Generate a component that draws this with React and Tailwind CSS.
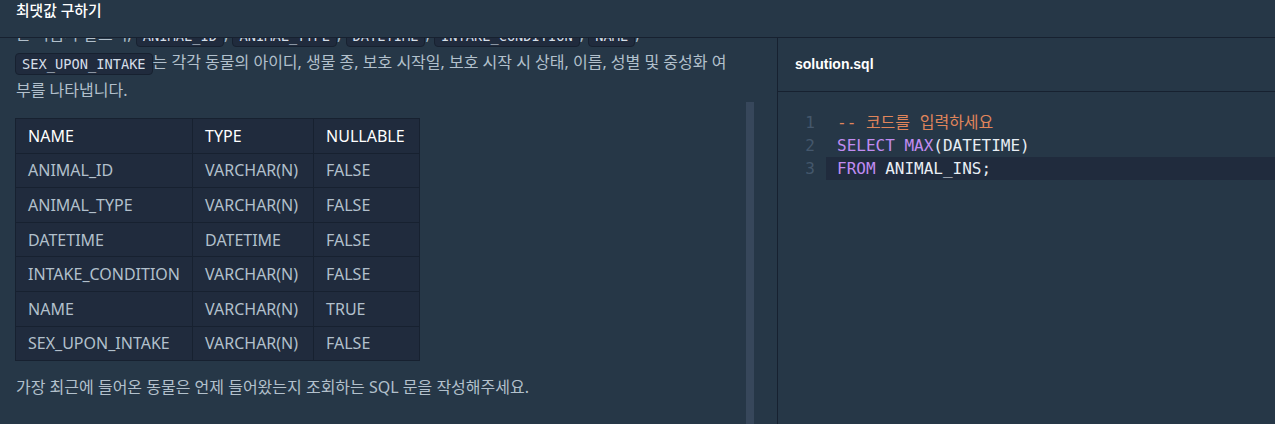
const rows = [
  ["ANIMAL_ID", "VARCHAR(N)", "FALSE"],
  ["ANIMAL_TYPE", "VARCHAR(N)", "FALSE"],
  ["DATETIME", "DATETIME", "FALSE"],
  ["INTAKE_CONDITION", "VARCHAR(N)", "FALSE"],
  ["NAME", "VARCHAR(N)", "TRUE"],
  ["SEX_UPON_INTAKE", "VARCHAR(N)", "FALSE"],
];

function Chip({ children }) {
  return (
    <code className="inline-block rounded-[4px] border border-[#172130] bg-[#202b3d] px-[6px] align-middle font-['DejaVu_Sans_Mono',monospace] text-[13.7px] leading-[20px] text-[#d5dee8]">
      {children}
    </code>
  );
}

export default function App() {
  return (
    <div className="flex h-[424px] w-[1275px] flex-col overflow-hidden bg-[#263747] font-['Noto_Sans','Noto_Sans_CJK_KR',sans-serif]">
      <div className="h-[38px] shrink-0 border-b border-[#172130] pl-4 text-[14.8px] font-medium leading-[20px] text-white">
        최댓값 구하기
      </div>
      <div className="flex min-h-0 flex-1">
        <div className="flex w-[778px] shrink-0 overflow-hidden border-r border-[#172130]">
          <div className="min-w-0 flex-1 pl-4">
            <div className="-mt-[18px] text-[16px] leading-[28px] text-[#b2c0cc]">
              <div className="whitespace-nowrap">
                는 다음과 같으며, <Chip>ANIMAL_ID</Chip>, <Chip>ANIMAL_TYPE</Chip>, <Chip>DATETIME</Chip>,{" "}
                <Chip>INTAKE_CONDITION</Chip>, <Chip>NAME</Chip>,
              </div>
              <div className="-ml-px whitespace-nowrap">
                <Chip>SEX_UPON_INTAKE</Chip>는 각각 동물의 아이디, 생물 종, 보호 시작일, 보호 시작 시 상태, 이름, 성별 및 중성화 여
              </div>
              <div className="whitespace-nowrap">부를 나타냅니다.</div>
            </div>
            <table className="-ml-px mt-[14px] table-fixed border-collapse text-[16px] leading-[22px]">
              <thead>
                <tr className="h-[34.6px]">
                  <th className="w-[175px] border border-[#172130] bg-[#202b3d] px-3 text-left font-normal text-white">NAME</th>
                  <th className="w-[121px] border border-[#172130] bg-[#202b3d] px-3 text-left font-normal text-white">TYPE</th>
                  <th className="w-[106px] border border-[#172130] bg-[#202b3d] px-3 text-left font-normal text-white">NULLABLE</th>
                </tr>
              </thead>
              <tbody>
                {rows.map((r) => (
                  <tr key={r[0]} className="h-[34.6px]">
                    {r.map((c, i) => (
                      <td key={i} className="whitespace-nowrap border border-[#172130] bg-[#202b3d] px-3 text-[#b2c0cc]">
                        {c}
                      </td>
                    ))}
                  </tr>
                ))}
              </tbody>
            </table>
            <p className="mt-[12px] whitespace-nowrap text-[16px] leading-[28px] text-[#b2c0cc]">
              가장 최근에 들어온 동물은 언제 들어왔는지 조회하는 SQL 문을 작성해주세요.
            </p>
          </div>
          <div className="w-[8px] shrink-0 pt-[64px]">
            <div className="h-full bg-[#37475b]" />
          </div>
          <div className="w-[23px] shrink-0" />
        </div>
        <div className="flex min-w-0 flex-1 flex-col">
          <div className="flex h-[54px] shrink-0 items-center border-b border-[#172130] pl-[17px] font-['Liberation_Sans',sans-serif] text-[14px] font-bold text-white">
            solution.sql
          </div>
          <div className="pt-[19px] font-['DejaVu_Sans_Mono','Noto_Sans_CJK_KR',monospace] text-[16px] leading-[23px]">
            <div className="flex h-[23px]">
              <div className="w-[48px] shrink-0 pr-[11px] text-right text-[#44576c]">1</div>
              <div className="flex-1 whitespace-pre pl-[11px] text-[#e0855b]">-- 코드를 입력하세요</div>
            </div>
            <div className="flex h-[23px]">
              <div className="w-[48px] shrink-0 pr-[11px] text-right text-[#44576c]">2</div>
              <div className="flex-1 whitespace-pre pl-[11px] text-[#e8eef4]">
                <span className="text-[#c08cf2]">SELECT</span> <span className="text-[#c08cf2]">MAX</span>(DATETIME)
              </div>
            </div>
            <div className="flex h-[23px]">
              <div className="w-[48px] shrink-0 pr-[11px] text-right text-[#44576c]">3</div>
              <div className="flex-1 whitespace-pre bg-[#202b3d] pl-[11px] text-[#e8eef4]">
                <span className="text-[#c08cf2]">FROM</span> ANIMAL_INS;
              </div>
            </div>
          </div>
        </div>
      </div>
    </div>
  );
}
